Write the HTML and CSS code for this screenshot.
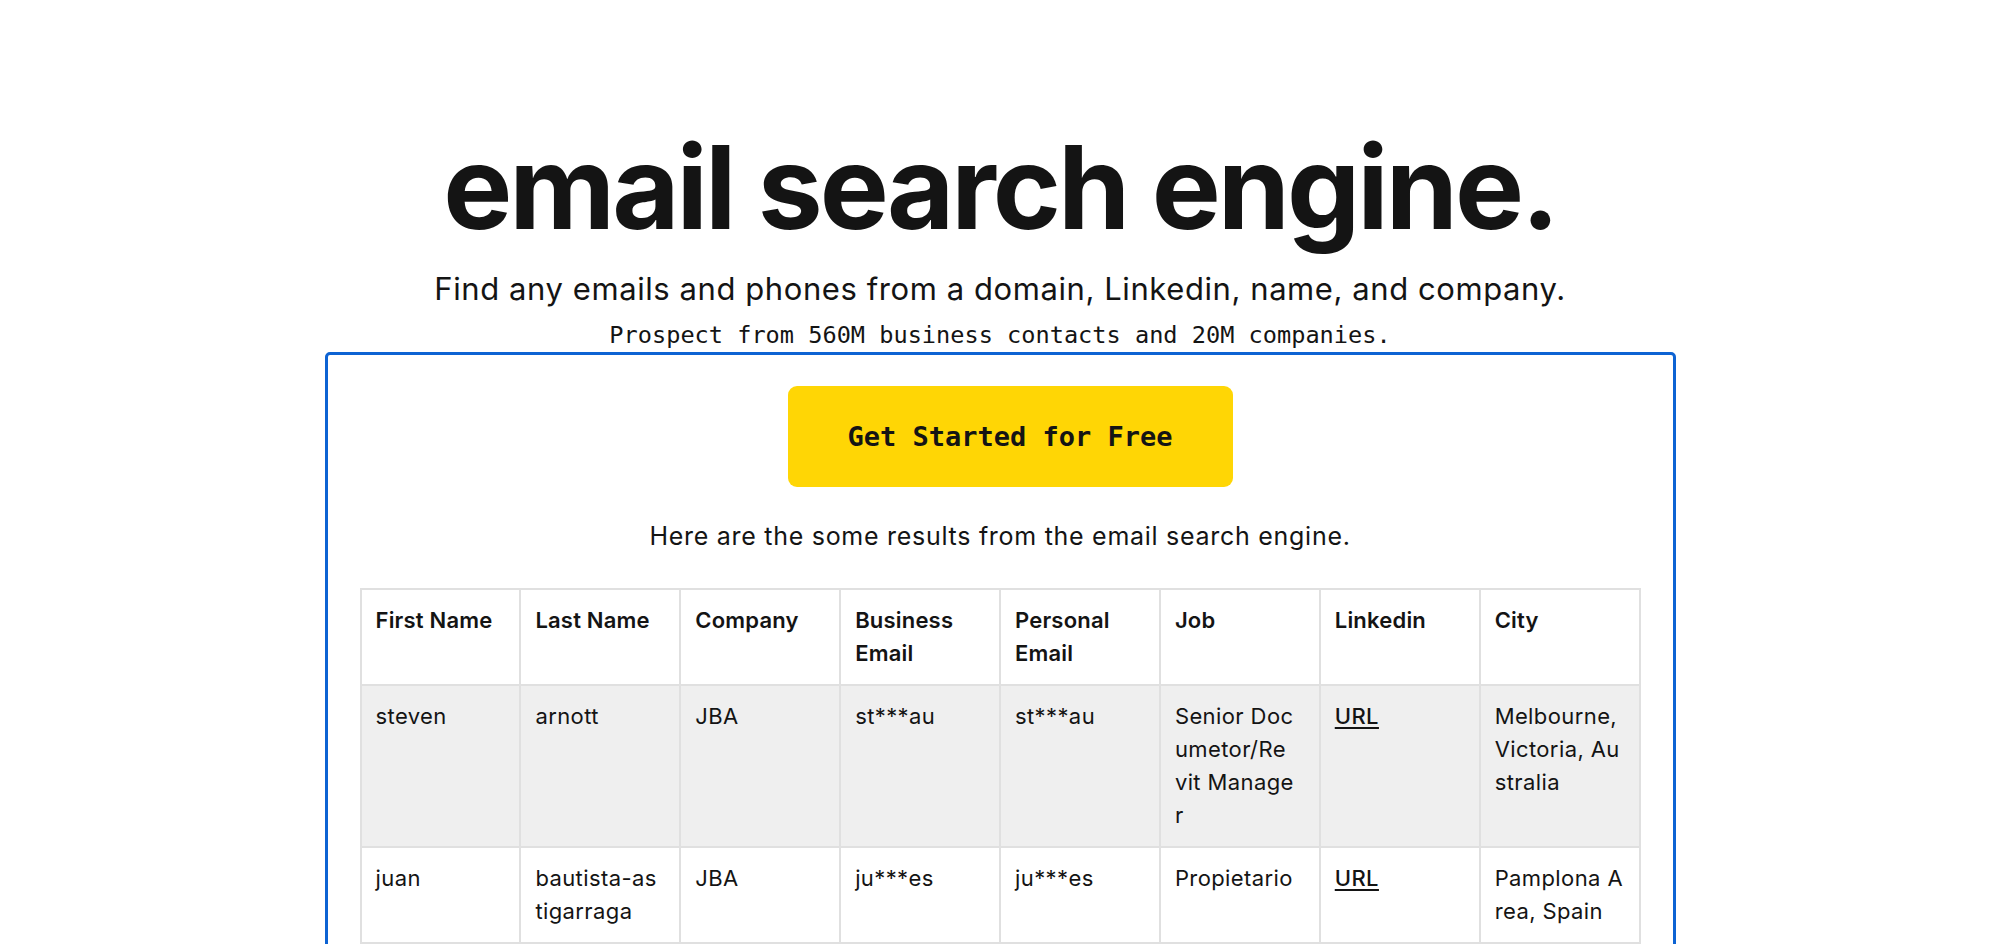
FILE: index.html
```html
<!DOCTYPE html>
<html lang="en">
<head>
<meta charset="utf-8">
<title>email search engine.</title>
<link rel="stylesheet" href="styles.css">
</head>
<body>
<main class="hero">
  <h1 class="title">email search engine.</h1>
  <p class="lead">Find any emails and phones from a domain, Linkedin, name, and company.</p>
  <p class="stat">Prospect from 560M business contacts and 20M companies.</p>
  <section class="panel">
    <div class="cta-row"><a class="cta" href="#">Get Started for Free</a></div>
    <p class="note">Here are the some results from the email search engine.</p>
    <table class="results">
      <thead>
        <tr>
          <th>First Name</th>
          <th>Last Name</th>
          <th>Company</th>
          <th>Business Email</th>
          <th>Personal Email</th>
          <th>Job</th>
          <th>Linkedin</th>
          <th>City</th>
        </tr>
      </thead>
      <tbody>
        <tr class="odd">
          <td>steven</td>
          <td>arnott</td>
          <td>JBA</td>
          <td>st***au</td>
          <td>st***au</td>
          <td class="job">Senior Documetor/Revit Manager</td>
          <td><a class="url" href="#">URL</a></td>
          <td class="city">Melbourne, Victoria, Australia</td>
        </tr>
        <tr>
          <td>juan</td>
          <td>bautista-astigarraga</td>
          <td>JBA</td>
          <td>ju***es</td>
          <td>ju***es</td>
          <td class="job">Propietario</td>
          <td><a class="url" href="#">URL</a></td>
          <td class="city">Pamplona Area, Spain</td>
        </tr>
      </tbody>
    </table>
  </section>
</main>
</body>
</html>
```
FILE: styles.css
```css
* { box-sizing: border-box; }
html, body { margin: 0; padding: 0; background: #ffffff; }
body {
  font-family: Inter, "Noto Sans", "Liberation Sans", sans-serif;
  color: #141414;
}
.hero {
  display: flex;
  flex-direction: column;
  align-items: center;
  padding-top: 129px;
}
.title {
  margin: 0;
  font-size: 116px;
  line-height: 116px;
  font-weight: 700;
  letter-spacing: -3px;
  color: #141414;
}
.lead {
  margin: 24px 0 0;
  font-size: 31px;
  line-height: 40px;
  font-weight: 400;
  letter-spacing: 0.58px;
}
.stat {
  margin: 11px 0 0;
  font-family: "DejaVu Sans Mono", "Liberation Mono", monospace;
  font-size: 23.6px;
  line-height: 30px;
}
.panel {
  margin-top: 2px;
  width: 1351px;
  border: 3px solid #0d63d3;
  border-radius: 5px;
  padding: 31px 32px 40px;
  display: flex;
  flex-direction: column;
  align-items: stretch;
}
.cta-row {
  display: flex;
  justify-content: center;
  padding-left: 20px;
}
.cta {
  display: flex;
  align-items: center;
  justify-content: center;
  width: 445px;
  height: 101px;
  background: #ffd605;
  border-radius: 9px;
  color: #141414;
  text-decoration: none;
  font-family: "DejaVu Sans Mono", "Liberation Mono", monospace;
  font-weight: 700;
  font-size: 27px;
}
.note {
  margin: 33px 0 0;
  text-align: center;
  font-size: 25px;
  line-height: 32px;
  letter-spacing: 0.72px;
}
.results {
  margin-top: 36px;
  width: 100%;
  table-layout: fixed;
  border-collapse: collapse;
  font-size: 22px;
  line-height: 33px;
}
.results th,
.results td {
  border: 2px solid #e0e0e0;
  padding: 14px 18px 14px 14px;
  text-align: left;
  vertical-align: top;
}
.results th {
  font-weight: 600;
  letter-spacing: 0.2px;
}
.results td {
  word-break: break-all;
  letter-spacing: 0.4px;
}
.results td.job { padding-right: 24px; }
.results td.city { padding-right: 14px; }
.results tr.odd td { background: #efefef; }
.url {
  color: #141414;
  font-weight: 500;
  text-decoration: underline;
  text-underline-offset: 3px;
}
```
